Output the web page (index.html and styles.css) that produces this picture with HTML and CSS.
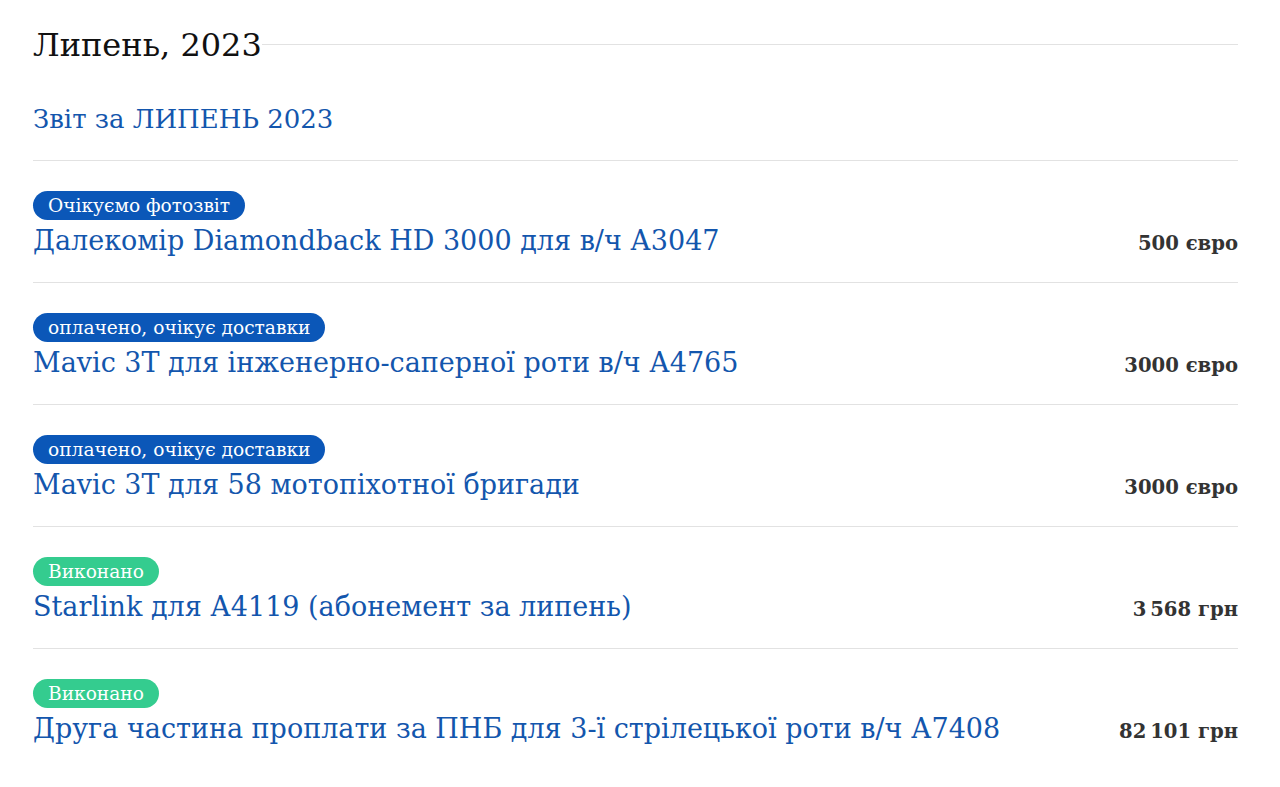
FILE: index.html
```html
<!DOCTYPE html>
<html lang="uk">
<head>
<meta charset="utf-8">
<title>Липень, 2023</title>
<link rel="stylesheet" href="styles.css">
</head>
<body>
<main class="page">
  <h2 class="month"><span class="month-text">Липень, 2023</span><span class="month-rule"></span></h2>
  <a class="report" href="#">Звіт за ЛИПЕНЬ 2023</a>
  <ul class="list">
    <li class="item">
      <span class="badge badge-blue">Очікуємо фотозвіт</span>
      <div class="line">
        <a class="title" href="#">Далекомір Diamondback HD 3000 для в/ч А3047</a>
        <span class="price">500 євро</span>
      </div>
    </li>
    <li class="item">
      <span class="badge badge-blue">оплачено, очікує доставки</span>
      <div class="line">
        <a class="title" href="#">Mavic 3T для інженерно-саперної роти в/ч А4765</a>
        <span class="price">3000 євро</span>
      </div>
    </li>
    <li class="item">
      <span class="badge badge-blue">оплачено, очікує доставки</span>
      <div class="line">
        <a class="title" href="#">Mavic 3T для 58 мотопіхотної бригади</a>
        <span class="price">3000 євро</span>
      </div>
    </li>
    <li class="item">
      <span class="badge badge-green">Виконано</span>
      <div class="line">
        <a class="title" href="#">Starlink для А4119 (абонемент за липень)</a>
        <span class="price">3&#8201;568 грн</span>
      </div>
    </li>
    <li class="item">
      <span class="badge badge-green">Виконано</span>
      <div class="line">
        <a class="title" href="#">Друга частина проплати за ПНБ для 3-ї стрілецької роти в/ч А7408</a>
        <span class="price">82&#8201;101 грн</span>
      </div>
    </li>
  </ul>
</main>
</body>
</html>
```

FILE: styles.css
```css
* { box-sizing: border-box; }
html, body { margin: 0; padding: 0; background: #fff; }
body { font-family: "DejaVu Serif", "Liberation Serif", serif; }
.page { padding: 22px 42px 0 33px; }
.month {
  display: flex;
  align-items: center;
  margin: 0;
  font-weight: normal;
  font-size: 32px;
  line-height: 46px;
  color: #111;
}
.month-text { flex: none; }
.month-rule { flex: 1; height: 1px; background: #e2e2e2; margin-top: -2px; }
.report {
  display: block;
  margin-top: 31px;
  font-size: 26px;
  line-height: 40px;
  color: #1356ad;
  text-decoration: none;
  padding-bottom: 21px;
  border-bottom: 1px solid #e2e2e2;
}
.list { list-style: none; margin: 0; padding: 0; }
.item {
  height: 122px;
  padding-top: 30px;
  border-bottom: 1px solid #e2e2e2;
}
.item:last-child { border-bottom: none; }
.badge {
  display: inline-block;
  height: 29px;
  line-height: 29px;
  padding: 0 15px;
  border-radius: 15px;
  color: #fff;
  font-size: 18.6px;
}
.badge-blue { background: #0b57b8; }
.badge-green { background: #34cc8f; }
.line {
  display: flex;
  justify-content: space-between;
  align-items: baseline;
  margin-top: 1px;
}
.title {
  font-size: 27px;
  line-height: 40px;
  color: #1356ad;
  text-decoration: none;
}
.price {
  font-size: 19.6px;
  font-weight: bold;
  color: #333;
}
```
